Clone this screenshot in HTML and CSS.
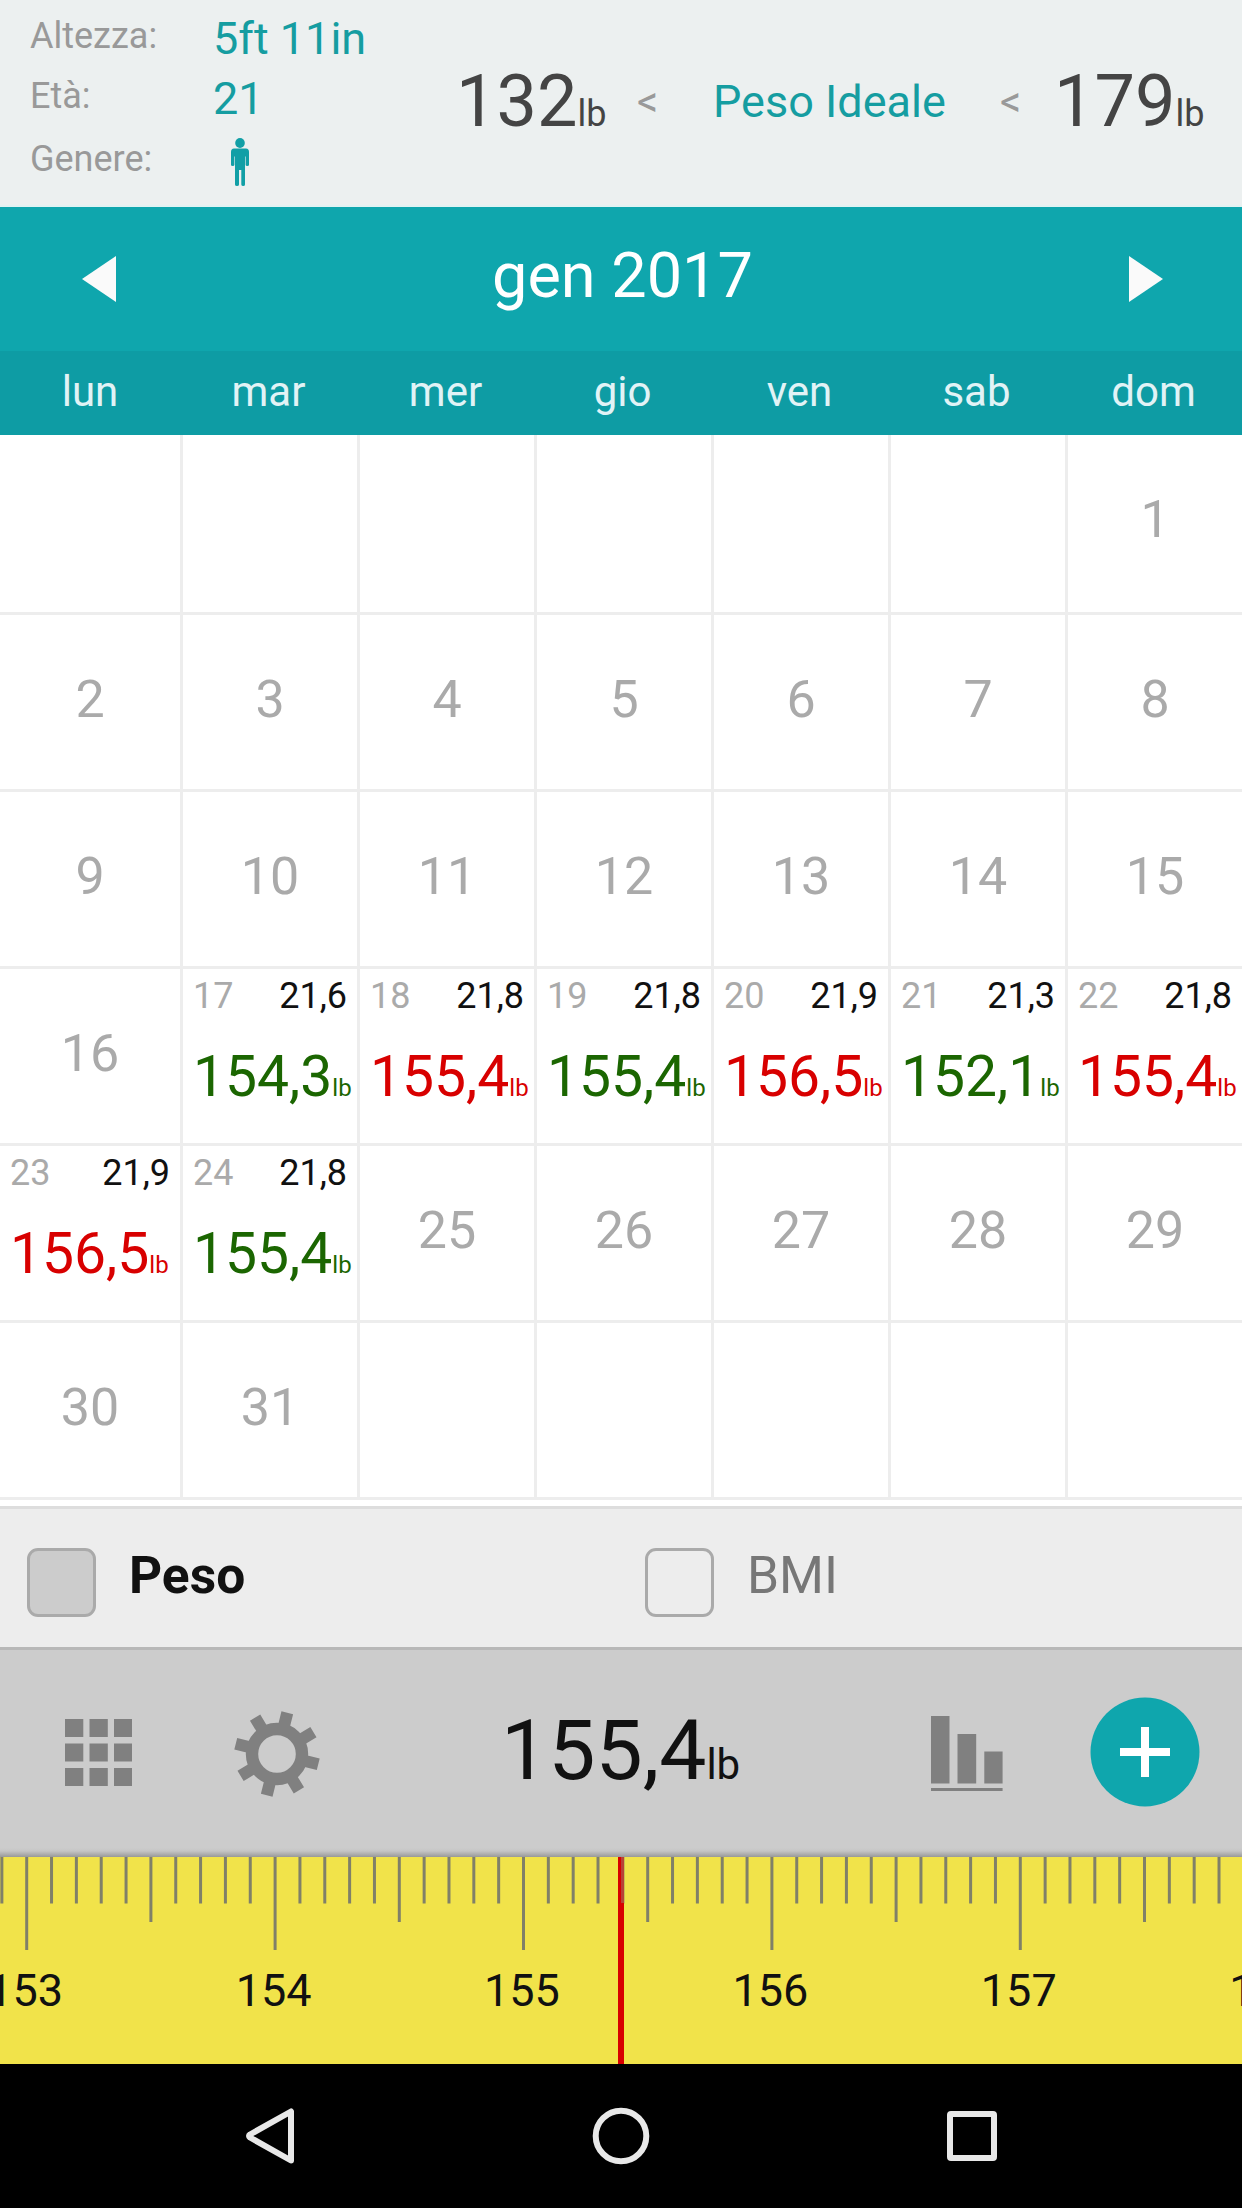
FILE: index.html
```html
<!DOCTYPE html>
<html lang="it">
<head>
<meta charset="utf-8">
<title>Diario del peso</title>
<link rel="stylesheet" href="styles.css">
</head>
<body>
<main class="app">
  <section class="profile">
    <div class="profile-labels"><span>Altezza:</span><span>Età:</span><span>Genere:</span></div>
    <div class="profile-values">
      <span>5ft 11in</span><span>21</span>
      <svg class="person" viewBox="0 0 18 48" width="18" height="48"><ellipse cx="9" cy="5" rx="4.8" ry="5"/><path d="M3 10.5H15Q18 10.5 18 14V27Q18 28 16.3 28T14.6 27V18.500H14V46.500Q14 48 12.200 48T10.300 46.500V32H8V46.500Q8 48 6 48T4 46.500V18.500H3.400V27Q3.400 28 1.700 28T0 27V14Q0 10.500 3 10.500Z"/></svg>
    </div>
    <div class="limit">132<small>lb</small></div>
    <div class="less">&lt;</div>
    <div class="ideal">Peso Ideale</div>
    <div class="less">&lt;</div>
    <div class="limit">179<small>lb</small></div>
  </section>

  <header class="month">
    <svg width="34" height="46" viewBox="0 0 34 46"><path d="M34 0V46L0 23Z"/></svg>
    <h1>gen 2017</h1>
    <svg width="34" height="46" viewBox="0 0 34 46"><path d="M0 0V46L34 23Z"/></svg>
  </header>
  <div class="weekdays"><span>lun</span><span>mar</span><span>mer</span><span>gio</span><span>ven</span><span>sab</span><span>dom</span></div>

  <section class="calendar">
    <div class="day"></div><div class="day"></div><div class="day"></div><div class="day"></div><div class="day"></div><div class="day"></div><div class="day">1</div>
    <div class="day">2</div><div class="day">3</div><div class="day">4</div><div class="day">5</div><div class="day">6</div><div class="day">7</div><div class="day">8</div>
    <div class="day">9</div><div class="day">10</div><div class="day">11</div><div class="day">12</div><div class="day">13</div><div class="day">14</div><div class="day">15</div>
    <div class="day">16</div>
    <div class="day entry loss"><p class="info"><span>17</span><b>21,6</b></p><p class="weight">154,3<small>lb</small></p></div>
    <div class="day entry gain"><p class="info"><span>18</span><b>21,8</b></p><p class="weight">155,4<small>lb</small></p></div>
    <div class="day entry loss"><p class="info"><span>19</span><b>21,8</b></p><p class="weight">155,4<small>lb</small></p></div>
    <div class="day entry gain"><p class="info"><span>20</span><b>21,9</b></p><p class="weight">156,5<small>lb</small></p></div>
    <div class="day entry loss"><p class="info"><span>21</span><b>21,3</b></p><p class="weight">152,1<small>lb</small></p></div>
    <div class="day entry gain"><p class="info"><span>22</span><b>21,8</b></p><p class="weight">155,4<small>lb</small></p></div>
    <div class="day entry gain"><p class="info"><span>23</span><b>21,9</b></p><p class="weight">156,5<small>lb</small></p></div>
    <div class="day entry loss"><p class="info"><span>24</span><b>21,8</b></p><p class="weight">155,4<small>lb</small></p></div>
    <div class="day">25</div><div class="day">26</div><div class="day">27</div><div class="day">28</div><div class="day">29</div>
    <div class="day">30</div><div class="day">31</div><div class="day"></div><div class="day"></div><div class="day"></div><div class="day"></div><div class="day"></div>
  </section>

  <section class="modes">
    <div class="mode selected"><i class="box"></i><span>Peso</span></div>
    <div class="mode"><i class="box"></i><span>BMI</span></div>
  </section>

  <section class="toolbar">
    <svg class="icon-grid" width="67" height="67" viewBox="0 0 67 67"><path d="M0 0h18.300v18H0zM24.500 0h18.300v18H24.500zM49 0h18v18H49zM0 24.500h18.300v18H0zM24.500 24.500h18.300v18H24.500zM49 24.500h18v18H49zM0 49h18.300v18H0zM24.500 49h18.300v18H24.500zM49 49h18v18H49z"/></svg>
    <svg class="icon-gear" width="86" height="86" viewBox="-43 -43 86 86">
      <circle r="25" fill="none" stroke="#808080" stroke-width="12.400"/>
      <g transform="rotate(14)">
        <path id="teeth" d="M-6-42.500H6V-28H-6ZM-6 28H6V42.500H-6ZM-42.500-6H-28V6H-42.500ZM28-6H42.500V6H28Z"/>
        <use href="#teeth" transform="rotate(45)"/>
      </g>
    </svg>
    <div class="reading">155,4<small>lb</small></div>
    <svg class="icon-bars" width="72" height="75" viewBox="0 0 72 75"><path d="M0 0h18.500v67.500H0zM26.500 18h18.700v49.500H26.500zM53.300 35.500h18.300v32H53.300zM0 72h71.600v3H0z"/></svg>
    <svg class="icon-add" width="110" height="110" viewBox="0 0 110 110"><circle cx="55" cy="55" r="54.500" fill="#0fa6ad"/><path d="M30 55H80M55 30V80" stroke="#fff" stroke-width="8"/></svg>
  </section>

  <section class="ruler">
    <svg class="ticks" width="1242" height="94" viewBox="0 0 1242 94">
      <defs><path id="pound" d="M0 0V93M24.840 0V46.500M49.680 0V46.500M74.520 0V46.500M99.360 0V46.500M124.200 0V65M149.040 0V46.500M173.880 0V46.500M198.720 0V46.500M223.560 0V46.500"/></defs>
      <g stroke="#808068" stroke-width="3" transform="translate(26.700)">
        <use href="#pound" x="-248.400"/><use href="#pound"/><use href="#pound" x="248.400"/><use href="#pound" x="496.800"/><use href="#pound" x="745.200"/><use href="#pound" x="993.600"/>
      </g>
    </svg>
    <div class="numbers"><span>153</span><span>154</span><span>155</span><span>156</span><span>157</span><span>158</span></div>
    <i class="needle"></i>
  </section>

  <nav class="system">
    <svg width="56" height="60" viewBox="0 0 56 60"><path d="M48 5.500V54.500L7 31.500Q5 30 7 28.500Z"/></svg>
    <svg width="60" height="60" viewBox="0 0 60 60"><circle cx="30" cy="30" r="25.300"/></svg>
    <svg width="60" height="60" viewBox="0 0 60 60"><rect x="8" y="8" width="44" height="44" rx="1"/></svg>
  </nav>
</main>
</body>
</html>
```
FILE: styles.css
```css
* { box-sizing: border-box; margin: 0; padding: 0; }
body { font-family: Roboto, "Liberation Sans", sans-serif; background: #fff; }
svg { display: block; flex: none; }
.app { width: 1242px; height: 2208px; display: flex; flex-direction: column; overflow: hidden; }

.profile { height: 207px; flex: none; display: grid; grid-template-columns: 213px 243px 181px 76px 287px 54px 188px; background: #ecf0f0; border-bottom: 2px solid #e2f2f2; white-space: nowrap; }
.profile-labels { padding: 6px 0 0 30px; display: flex; flex-direction: column; font-size: 36px; line-height: 60px; color: #999; }
.profile-labels span:last-child { line-height: 66px; }
.profile-values { padding-top: 9px; display: flex; flex-direction: column; font-size: 45px; line-height: 60px; color: #159da1; }
.person { margin: 9px 0 0 18px; fill: #119fa6; }
.limit { padding-top: 62px; font-size: 72px; line-height: 80px; color: #444; }
.limit small { font-size: 36px; }
.less { padding-top: 72px; font-size: 42px; line-height: 60px; color: #999; }
.ideal { padding-top: 72px; font-size: 45px; line-height: 60px; color: #159da1; }

.month { height: 144px; flex: none; padding: 0 79px 0 82px; display: flex; align-items: center; justify-content: space-between; background: #0fa6ad; }
.month svg { fill: #fafafa; }
.month h1 { padding-bottom: 6px; font-size: 63px; font-weight: 400; line-height: 72px; color: #fff; }
.weekdays { height: 84px; flex: none; display: grid; grid-template-columns: 180px repeat(6, 177px); text-align: center; font-size: 42px; line-height: 81px; color: #e1f3f6; background: #0e9ca4; }

.calendar { height: 1065px; flex: none; display: grid; grid-template-columns: 180px repeat(6, 174px); grid-template-rows: 177px repeat(5, 174px); gap: 3px; background: #ededed; border-bottom: 3px solid #ededed; }
.day { background: #fff; text-align: center; font-size: 52px; line-height: 170px; color: #aaa; }
.entry { padding: 0 10px; text-align: left; line-height: normal; white-space: nowrap; }
.info { padding-top: 6px; display: flex; justify-content: space-between; font-size: 36px; line-height: 42px; }
.info b { font-weight: 400; color: #111; }
.weight { margin-top: 24px; font-size: 57px; line-height: 72px; }
.weight small { font-size: 24px; }
.loss .weight { color: #1b6601; }
.gain .weight { color: #d80000; }

.modes { margin-top: 6px; height: 144px; flex: none; display: grid; grid-template-columns: 618px 1fr; background: #ededed; border-top: 3px solid #ddd; border-bottom: 3px solid #b8b8b8; }
.mode { padding: 39px 0 0 27px; display: flex; gap: 33px; font-size: 51.500px; line-height: 56px; color: #777; }
.box { width: 69px; height: 69px; border: 3px solid #aaa; border-radius: 11px; }
.selected { font-weight: 700; color: #111; }
.selected .box { background: #ccc; }

.toolbar { height: 207px; flex: none; padding-bottom: 3px; display: flex; align-items: center; background: linear-gradient(#ccc 198px, #c5c5c5 201px, #999 207px); fill: #808080; }
.icon-grid { margin-left: 65px; }
.icon-gear { margin-left: 102px; margin-top: 3px; }
.reading { margin: 12px 0 0 181px; width: 430px; font-size: 84px; line-height: 90px; color: #111; }
.reading small { font-size: 42px; }
.icon-bars { margin-top: 3px; }
.icon-add { margin-left: 87px; }

.ruler { position: relative; height: 207px; flex: none; overflow: hidden; background: #f1e34a; }
.numbers { width: 1490.400px; margin-left: -99px; display: flex; font-size: 45px; line-height: 79px; text-align: center; color: #111; }
.numbers span { width: 248.400px; }
.needle { position: absolute; left: 618px; top: 0; width: 6px; height: 207px; background: linear-gradient(to right, transparent 3px, #b84238 3px) top / 6px 46px no-repeat #d80000; }

.system { height: 144px; flex: none; padding: 0 240px 0 243px; display: flex; align-items: center; justify-content: space-between; background: #000; fill: none; stroke: #e8e8e8; stroke-width: 6; stroke-linejoin: round; }
```
